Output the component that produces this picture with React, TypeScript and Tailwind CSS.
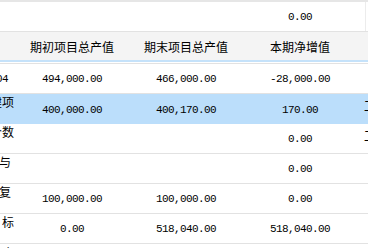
import React from 'react';

type Row = { name: string; start: string; end: string; net: string; extra?: string; selected?: boolean; num?: boolean; shift?: string };

const rows: Row[] = [
  { name: '2005-2004', start: '494,000.00', end: '466,000.00', net: '-28,000.00', num: true },
  { name: '其中:在建项', start: '400,000.00', end: '400,170.00', net: '170.00', extra: '工', selected: true },
  { name: '减少项目个数', start: '', end: '', net: '0.00', extra: '工' },
  { name: '其中:转让与', start: '', end: '', net: '0.00', shift: 'right-[4px]' },
  { name: '其中:竣工复', start: '100,000.00', end: '100,000.00', net: '0.00', shift: 'right-[4px]' },
  { name: '其中:新增 标', start: '0.00', end: '518,040.00', net: '518,040.00' },
  { name: '合计数额ab', start: '', end: '', net: '' }
];

const cjk = "font-['Noto_Sans_CJK_SC','Noto_Sans_CJK_JP',sans-serif] text-[12px]";
const mono = "font-['Liberation_Mono',monospace] text-[11px] tracking-[-0.6px]";

const App: React.FC = () => {
  return (
    <div className="w-[368px] h-[248px] overflow-hidden bg-white text-black">
      <div className="h-[2px] bg-[#e6e6e6]" />
      {/* previous row total */}
      <div className="grid grid-cols-[15px_114px_114px_114px_1fr] h-[30px] border-b border-[#e2e2e2]">
        <div />
        <div />
        <div />
        <div className={`flex items-center justify-center pt-[2px] ${mono}`}>0.00</div>
        <div className="border-l border-[#ececec] ml-[8px]" />
      </div>

      {/* header */}
      <div className={`grid grid-cols-[15px_114px_114px_114px_1fr] h-[30px] bg-[#f4f4f4] border-b-2 border-[#c5e2fa] ${cjk}`}>
        <div />
        <div className="flex items-center justify-center pt-[2px]">期初项目总产值</div>
        <div className="flex items-center justify-center pt-[2px]">期末项目总产值</div>
        <div className="flex items-center justify-center pt-[2px]">本期净增值</div>
        <div />
      </div>
      <div className="h-[2px] bg-white border-b border-[#e2e2e2]" />

      {rows.map((r, i) => (
        <div
          key={i}
          className={`grid grid-cols-[15px_114px_114px_114px_1fr] h-[30px] ${r.selected ? 'bg-[#bbdefb]' : 'border-b border-[#e2e2e2]'}`}
        >
          <div className="overflow-hidden relative">
            {r.num ? (
              <div className={`absolute top-0 bottom-0 right-[7px] flex items-center pt-[2px] whitespace-nowrap ${mono}`}>{r.name}</div>
            ) : (
              <div className={`absolute top-[-1px] ${r.shift ?? 'right-[1px]'} whitespace-nowrap ${cjk}`}>{r.name}</div>
            )}
          </div>
          <div className={`flex items-center justify-center pt-[2px] ${mono}`}>{r.start}</div>
          <div className={`flex items-center justify-center pt-[2px] ${mono}`}>{r.end}</div>
          <div className={`flex items-center justify-center pt-[2px] ${mono}`}>{r.net}</div>
          <div className={`pl-[7px] pt-[3px] whitespace-nowrap overflow-hidden ${cjk}`}>{r.extra}</div>
        </div>
      ))}
    </div>
  );
};

export default App;
